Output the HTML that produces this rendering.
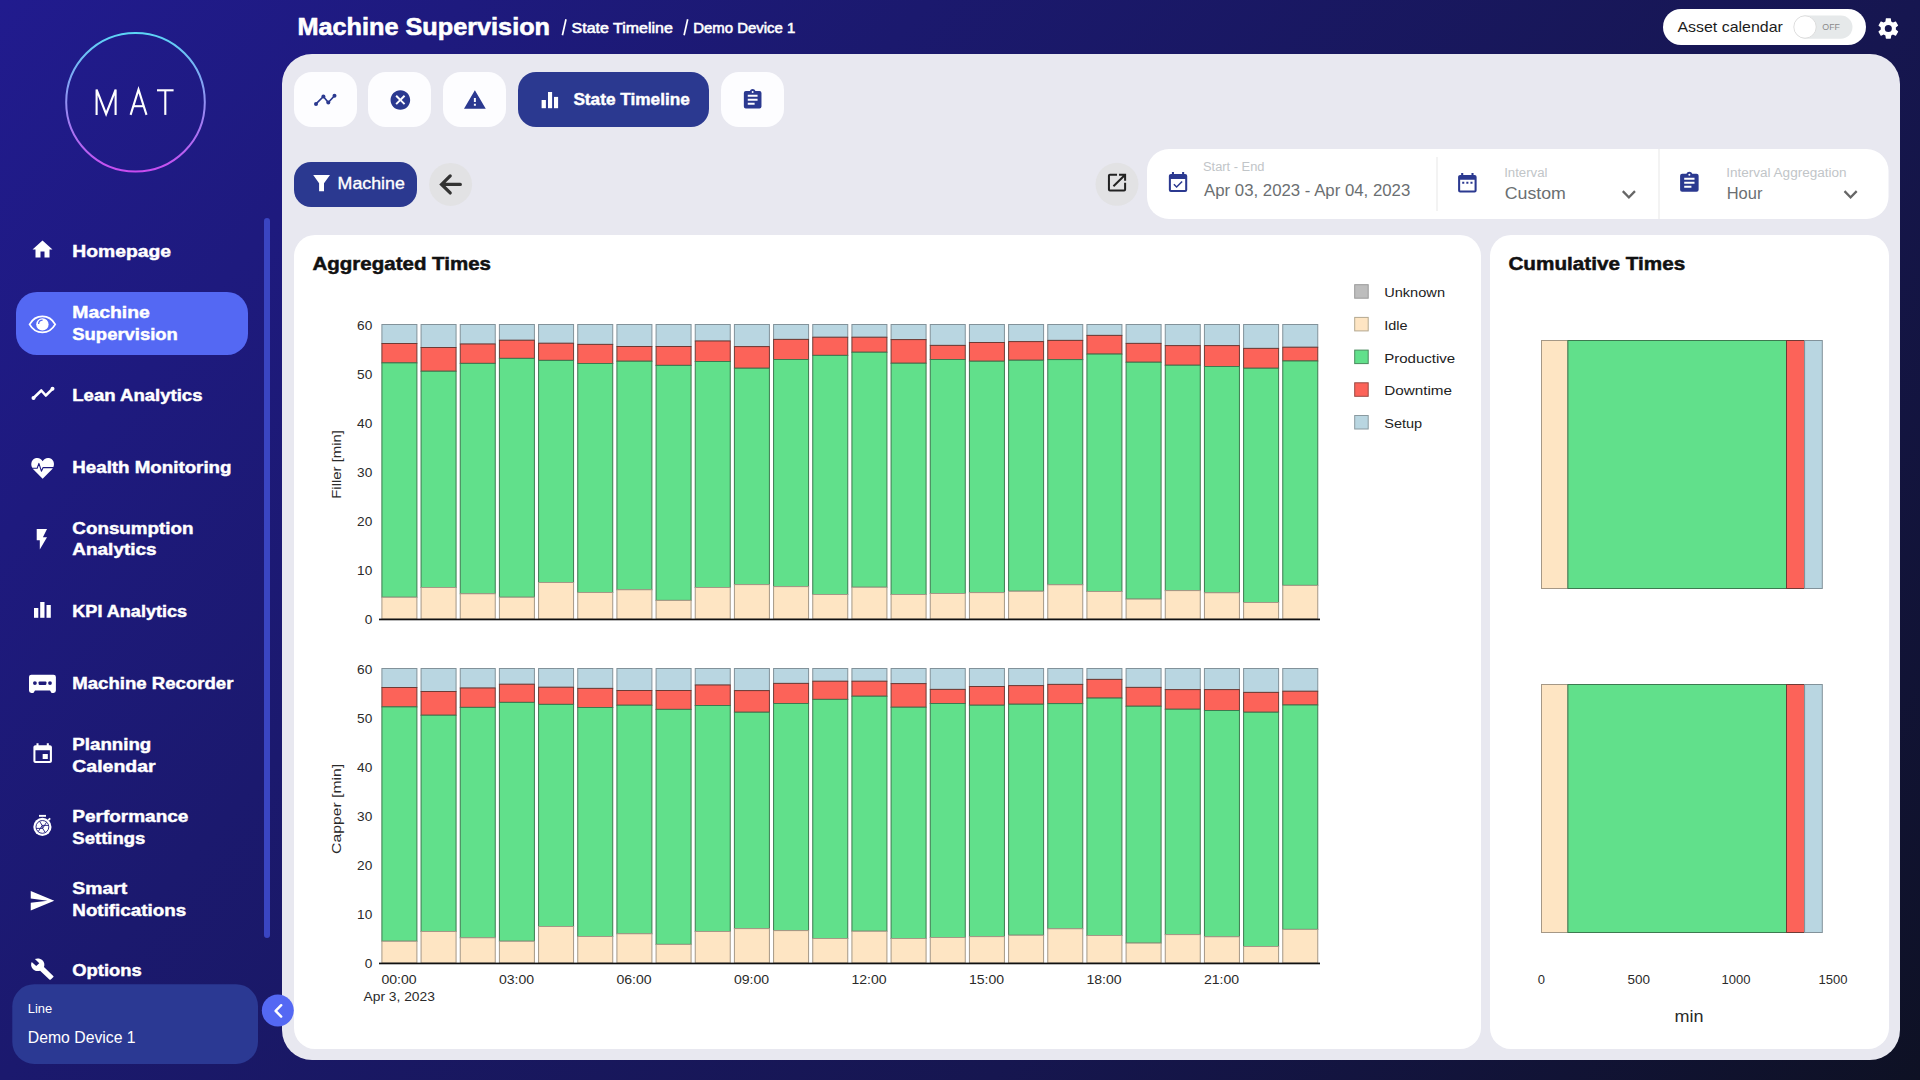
<!DOCTYPE html>
<html><head><meta charset="utf-8"><title>Machine Supervision - State Timeline</title>
<style>html,body{margin:0;padding:0;width:1920px;height:1080px;overflow:hidden;background:#1c1a74;font-family:"Liberation Sans",sans-serif}svg{display:block}</style>
</head><body>
<svg width="1920" height="1080" viewBox="0 0 1920 1080">
<defs>
<linearGradient id="bg" x1="0" y1="0" x2="1637" y2="1408" gradientUnits="userSpaceOnUse">
<stop offset="0" stop-color="#211b8e"/><stop offset="0.326" stop-color="#1b196e"/><stop offset="0.674" stop-color="#161650"/><stop offset="1" stop-color="#0e1124"/></linearGradient>
<linearGradient id="ring" x1="0" y1="0" x2="0" y2="1"><stop offset="0" stop-color="#5cd6f6"/><stop offset="1" stop-color="#c84cf0"/></linearGradient>
</defs>
<rect x="0" y="0" width="1920" height="1080" fill="url(#bg)"/>
<rect x="282" y="54" width="1618" height="1006" rx="30" fill="#e8e8f0"/>
<circle cx="135.5" cy="102.3" r="69.3" fill="none" stroke="url(#ring)" stroke-width="2"/>
<g fill="none" stroke="#fff" stroke-width="2.1" stroke-linejoin="miter"><polyline points="96.6,114.9 96.6,89.6 106.1,114 115.6,89.6 115.6,114.9"/><polyline points="130.6,114.9 138.5,89.6 146.5,114.9"/><line x1="133.3" y1="106.2" x2="143.8" y2="106.2"/><line x1="157" y1="90.3" x2="173.6" y2="90.3"/><line x1="165.3" y1="90.3" x2="165.3" y2="114.9"/></g>
<rect x="264" y="218" width="6" height="720" rx="3" fill="#3a45c2"/>
<rect x="16" y="292" width="232" height="63" rx="21" fill="#5468f3"/>
<rect x="12.3" y="984.2" width="245.7" height="79.8" rx="22" fill="#2b3993"/>
<circle cx="277.8" cy="1010.5" r="16" fill="#5468f3"/>
<path d="M281.2,1005.2 L275.6,1010.9 L281.2,1016.6" fill="none" stroke="#fff" stroke-width="2.4" stroke-linecap="round" stroke-linejoin="round"/>
<g font-family="Liberation Sans">
<text x="72.3" y="256.9" font-size="17" fill="#fff" font-weight="700" textLength="98.75" lengthAdjust="spacingAndGlyphs" stroke="#fff" stroke-width="0.45">Homepage</text>
<text x="72.3" y="317.9" font-size="17" fill="#fff" font-weight="700" textLength="77.5" lengthAdjust="spacingAndGlyphs" stroke="#fff" stroke-width="0.45">Machine</text>
<text x="72.3" y="340" font-size="17" fill="#fff" font-weight="700" textLength="105.6" lengthAdjust="spacingAndGlyphs" stroke="#fff" stroke-width="0.45">Supervision</text>
<text x="72.3" y="400.6" font-size="17" fill="#fff" font-weight="700" textLength="130.2" lengthAdjust="spacingAndGlyphs" stroke="#fff" stroke-width="0.45">Lean Analytics</text>
<text x="72.3" y="472.8" font-size="17" fill="#fff" font-weight="700" textLength="159.2" lengthAdjust="spacingAndGlyphs" stroke="#fff" stroke-width="0.45">Health Monitoring</text>
<text x="72.3" y="533.9" font-size="17" fill="#fff" font-weight="700" textLength="121.3" lengthAdjust="spacingAndGlyphs" stroke="#fff" stroke-width="0.45">Consumption</text>
<text x="72.3" y="555.2" font-size="17" fill="#fff" font-weight="700" textLength="84.3" lengthAdjust="spacingAndGlyphs" stroke="#fff" stroke-width="0.45">Analytics</text>
<text x="72.3" y="616.9" font-size="17" fill="#fff" font-weight="700" textLength="114.8" lengthAdjust="spacingAndGlyphs" stroke="#fff" stroke-width="0.45">KPI Analytics</text>
<text x="72.3" y="689" font-size="17" fill="#fff" font-weight="700" textLength="161.1" lengthAdjust="spacingAndGlyphs" stroke="#fff" stroke-width="0.45">Machine Recorder</text>
<text x="72.3" y="749.6" font-size="17" fill="#fff" font-weight="700" textLength="79" lengthAdjust="spacingAndGlyphs" stroke="#fff" stroke-width="0.45">Planning</text>
<text x="72.3" y="771.5" font-size="17" fill="#fff" font-weight="700" textLength="83.3" lengthAdjust="spacingAndGlyphs" stroke="#fff" stroke-width="0.45">Calendar</text>
<text x="72.3" y="821.9" font-size="17" fill="#fff" font-weight="700" textLength="116.1" lengthAdjust="spacingAndGlyphs" stroke="#fff" stroke-width="0.45">Performance</text>
<text x="72.3" y="843.7" font-size="17" fill="#fff" font-weight="700" textLength="73.1" lengthAdjust="spacingAndGlyphs" stroke="#fff" stroke-width="0.45">Settings</text>
<text x="72.3" y="893.7" font-size="17" fill="#fff" font-weight="700" textLength="55" lengthAdjust="spacingAndGlyphs" stroke="#fff" stroke-width="0.45">Smart</text>
<text x="72.3" y="916" font-size="17" fill="#fff" font-weight="700" textLength="113.9" lengthAdjust="spacingAndGlyphs" stroke="#fff" stroke-width="0.45">Notifications</text>
<text x="72.3" y="976" font-size="17" fill="#fff" font-weight="700" textLength="69.4" lengthAdjust="spacingAndGlyphs" stroke="#fff" stroke-width="0.45">Options</text>
<text x="27.8" y="1012.8" font-size="13" fill="#fff" textLength="24.4" lengthAdjust="spacingAndGlyphs">Line</text>
<text x="27.8" y="1043.3" font-size="16" fill="#fff" textLength="107.8" lengthAdjust="spacingAndGlyphs">Demo Device 1</text>
<text x="297.5" y="35" font-size="24" fill="#fff" font-weight="700" textLength="252.5" lengthAdjust="spacingAndGlyphs" stroke="#fff" stroke-width="0.6">Machine Supervision</text>
<text x="571.6" y="32.7" font-size="14.2" fill="#fff" textLength="101.2" lengthAdjust="spacingAndGlyphs" stroke="#fff" stroke-width="0.55">State Timeline</text>
<line x1="562.4" y1="35.2" x2="566" y2="19.2" stroke="#fff" stroke-width="1.7"/><line x1="684.1" y1="35.2" x2="687.7" y2="19.2" stroke="#fff" stroke-width="1.7"/>
<text x="693.3" y="32.7" font-size="14.2" fill="#fff" textLength="102" lengthAdjust="spacingAndGlyphs" stroke="#fff" stroke-width="0.55">Demo Device 1</text>
</g>
<path transform="translate(30.50,237.60) scale(1.000,1.000)" d="M10,20V14H14V20H19V12H22L12,3L2,12H5V20H10Z" fill="#fff"/>
<path d="M29.6,324.4 C33,318.3 37.5,316.4 42.4,316.4 C47.3,316.4 51.8,318.3 55.2,324.4 C51.8,330.5 47.3,332.4 42.4,332.4 C37.5,332.4 33,330.5 29.6,324.4 Z" fill="none" stroke="#fff" stroke-width="1.8"/><circle cx="42.4" cy="324.4" r="6.2" fill="#fff"/><path d="M38.6,324 A4,4 0 0 1 42.6,320.2" fill="none" stroke="#5467ef" stroke-width="1.3"/>
<g fill="none" stroke="#fff" stroke-width="2.6" stroke-linecap="round" stroke-linejoin="round"><polyline points="33.5,398 41.3,390.5 45.8,395.5 52.5,388.8"/></g>
<g fill="#fff"><circle cx="33.5" cy="398" r="2"/><circle cx="52.5" cy="388.8" r="2"/></g>
<path d="M42.65,478.7 L33.2,469.2 C30.2,466 30.6,460 35.3,458.3 C38.6,457.2 41.3,458.8 42.65,461.3 C44,458.8 46.7,457.2 50,458.3 C54.7,460 55.1,466 52.1,469.2 Z" fill="#fff"/><polyline points="30.5,468.2 37.2,468.2 38.9,463.4 41.4,471.2 43.1,467.6 55,467.6" fill="none" stroke="#1d1a80" stroke-width="1.1" stroke-linejoin="round"/>
<path transform="translate(29.50,526.90) scale(1.030,1.030)" d="M7,2V13H10V22L17,10H13L17,2H7Z" fill="#fff"/>
<g fill="#fff"><rect x="34" y="608" width="4.3" height="9.8"/><rect x="40.2" y="602" width="4.3" height="15.8"/><rect x="46.5" y="605" width="4.3" height="12.8"/></g>
<path d="M31.4,674.7 H53.5 A2.4,2.4 0 0 1 55.9,677.1 V690.6 A2.4,2.4 0 0 1 53.5,693 H51.6 L50,690.4 H35 L33.4,693 H31.4 A2.4,2.4 0 0 1 29,690.6 V677.1 A2.4,2.4 0 0 1 31.4,674.7 Z" fill="#fff"/>
<g fill="#1e1b7a"><circle cx="34.9" cy="683.1" r="1.9"/><rect x="38.6" y="681.4" width="7.8" height="3.5" rx="0.8"/><circle cx="50" cy="683.1" r="1.9"/></g>
<path transform="translate(30.30,742.30) scale(1.030,0.985)" d="M17 12h-5v5h5v-5zM16 1v2H8V1H6v2H5c-1.11 0-1.99.9-1.99 2L3 19c0 1.1.89 2 2 2h14c1.1 0 2-.9 2-2V5c0-1.1-.9-2-2-2h-1V1h-2zm3 18H5V8h14v11z" fill="#fff"/>
<circle cx="42.4" cy="826.9" r="9.1" fill="#fff"/><circle cx="42.4" cy="826.9" r="6.4" fill="none" stroke="#1d1a7a" stroke-width="0.9"/><g stroke="#1d1a7a" stroke-width="0.9" fill="none"><path d="M36.2,828.4 H42.8 M42.1,825.4 H48.6 M39.6,821.3 L43.2,827.2 M45.2,832.5 L41.6,826.6 M46.5,822.3 L42.7,828.2 M38.3,831.5 L42.1,825.6"/></g><rect x="39" y="814.9" width="7" height="1.9" fill="#fff"/><line x1="48.3" y1="820.2" x2="50.2" y2="818.4" stroke="#fff" stroke-width="1.8"/>
<path transform="translate(28.50,887.70) scale(1.120,1.080)" d="M2,21L23,12L2,3V10L17,12L2,14V21Z" fill="#fff"/>
<path transform="translate(30.10,957.30) scale(1.020,0.980)" d="M22.7,19L13.6,9.9C14.5,7.6 14,4.9 12.1,3C10.1,1 7.1,0.6 4.7,1.7L9,6L6,9L1.6,4.7C0.4,7.1 0.9,10.1 2.9,12.1C4.8,14 7.5,14.5 9.8,13.6L18.9,22.7C19.3,23.1 19.9,23.1 20.3,22.7L22.6,20.4C23.1,20 23.1,19.3 22.7,19Z" fill="#fff"/>
<rect x="1663" y="9" width="203" height="36" rx="18" fill="#fff"/>
<g font-family="Liberation Sans">
<text x="1677.4" y="32" font-size="14.5" fill="#1c1c1c" textLength="105.5" lengthAdjust="spacingAndGlyphs">Asset calendar</text>
</g>
<rect x="1794" y="15.5" width="58.5" height="23.2" rx="11.6" fill="#e6e9ea"/>
<circle cx="1805" cy="27" r="11.2" fill="#fff" stroke="#d5d5d5" stroke-width="0.8"/>
<text x="1822.3" y="29.8" font-family="Liberation Sans" font-size="9.5" fill="#8a8a8a" textLength="17.6" lengthAdjust="spacingAndGlyphs">OFF</text>
<path transform="translate(1876.20,16.30) scale(1.010,1.020)" d="M12,15.5A3.5,3.5 0 0,1 8.5,12A3.5,3.5 0 0,1 12,8.5A3.5,3.5 0 0,1 15.5,12A3.5,3.5 0 0,1 12,15.5M19.43,12.97C19.47,12.65 19.5,12.33 19.5,12C19.5,11.67 19.47,11.34 19.43,11L21.54,9.37C21.73,9.22 21.78,8.95 21.66,8.73L19.66,5.27C19.54,5.05 19.27,4.96 19.05,5.05L16.56,6.05C16.04,5.66 15.5,5.32 14.87,5.07L14.5,2.42C14.46,2.18 14.25,2 14,2H10C9.75,2 9.54,2.18 9.5,2.42L9.13,5.07C8.5,5.32 7.96,5.66 7.44,6.05L4.95,5.05C4.73,4.96 4.46,5.050 4.34,5.27L2.34,8.73C2.21,8.95 2.27,9.22 2.46,9.37L4.57,11C4.53,11.34 4.5,11.67 4.5,12C4.5,12.33 4.53,12.65 4.57,12.97L2.46,14.63C2.27,14.78 2.21,15.05 2.34,15.27L4.34,18.73C4.46,18.95 4.73,19.03 4.95,18.95L7.44,17.94C7.96,18.34 8.5,18.68 9.13,18.93L9.5,21.58C9.54,21.82 9.75,22 10,22H14C14.25,22 14.46,21.82 14.5,21.58L14.87,18.93C15.5,18.67 16.04,18.34 16.56,17.94L19.05,18.95C19.27,19.03 19.54,18.95 19.66,18.73L21.66,15.27C21.78,15.05 21.73,14.78 21.54,14.63L19.43,12.97Z" fill="#fff"/>
<rect x="294" y="72" width="63" height="55" rx="18" fill="#fdfdff"/>
<rect x="368" y="72" width="63" height="55" rx="18" fill="#fdfdff"/>
<rect x="443" y="72" width="63" height="55" rx="18" fill="#fdfdff"/>
<rect x="721" y="72" width="63" height="55" rx="18" fill="#fdfdff"/>
<rect x="518" y="72" width="191" height="55" rx="18" fill="#2b3990"/>
<g fill="none" stroke="#2b3990" stroke-width="1.7" stroke-linejoin="round"><polyline points="316,103.9 323.4,96.5 328.3,102.5 334.5,95.7"/></g><g fill="#2b3990"><circle cx="316" cy="103.9" r="2"/><circle cx="323.4" cy="96.5" r="2"/><circle cx="328.3" cy="102.5" r="2"/><circle cx="334.5" cy="95.7" r="2"/></g>
<path transform="translate(388.60,88.20) scale(0.980,0.980)" d="M12,2C17.53,2 22,6.47 22,12C22,17.53 17.53,22 12,22C6.47,22 2,17.530 2,12C2,6.47 6.47,2 12,2M15.59,7L12,10.59L8.41,7L7,8.41L10.59,12L7,15.59L8.41,17L12,13.41L15.59,17L17,15.59L13.41,12L17,8.41L15.59,7Z" fill="#2b3990"/>
<path transform="translate(463.00,88.40) scale(0.990,0.965)" d="M13,14H11V10H13M13,18H11V16H13M1,21H23L12,2L1,21Z" fill="#2b3990"/>
<g fill="#fff"><rect x="541.6" y="100" width="4.3" height="8.2"/><rect x="548" y="92" width="4.1" height="16.2"/><rect x="554" y="96.9" width="4.1" height="11.3"/></g>
<g font-family="Liberation Sans">
<text x="573.4" y="105" font-size="17" fill="#fff" font-weight="700" textLength="116.4" lengthAdjust="spacingAndGlyphs" stroke="#fff" stroke-width="0.45">State Timeline</text>
</g>
<path transform="translate(740.90,88.00) scale(0.980,0.980)" d="M17,9H7V7H17M17,13H7V11H17M14,17H7V15H14M12,3A1,1 0 0,1 13,4A1,1 0 0,1 12,5A1,1 0 0,1 11,4A1,1 0 0,1 12,3M19,3H14.82C14.4,1.84 13.3,1 12,1C10.7,1 9.6,1.84 9.18,3H5A2,2 0 0,0 3,5V19A2,2 0 0,0 5,21H19A2,2 0 0,0 21,19V5A2,2 0 0,0 19,3Z" fill="#2b3990"/>
<rect x="294" y="162" width="123" height="45" rx="17" fill="#2b3990"/>
<polygon points="313.2,174.9 330,174.9 324,183.3 324,191.3 319.1,191.3 319.1,183.3" fill="#fff"/>
<g font-family="Liberation Sans">
<text x="337.6" y="189.4" font-size="16.5" fill="#fff" textLength="67.2" lengthAdjust="spacingAndGlyphs" stroke="#fff" stroke-width="0.35">Machine</text>
</g>
<circle cx="450.6" cy="184.4" r="21.5" fill="#e2e2e4"/>
<path d="M460.3,184.4 H443 M450.2,175.9 L441.6,184.4 L450.2,192.9" fill="none" stroke="#333" stroke-width="3.3" stroke-linecap="round" stroke-linejoin="miter"/>
<circle cx="1117" cy="184.3" r="21.5" fill="#e2e2e4"/>
<path transform="translate(1104.90,170.80) scale(1.010,0.990)" d="M14,3V5H17.59L7.76,14.83L9.17,16.24L19,6.41V10H21V3M19,19H5V5H12V3H5C3.89,3 3,3.9 3,5V19A2,2 0 0,0 5,21H19A2,2 0 0,0 21,19V12H19V19Z" fill="#222"/>
<rect x="1147" y="149" width="741.5" height="70" rx="22" fill="#fff"/>
<rect x="1436.4" y="157" width="1.2" height="54" fill="#ececec"/>
<rect x="1658.4" y="149" width="1.2" height="70" fill="#ececec"/>
<path transform="translate(1165.80,170.90) scale(1.020,1.010)" d="M19,19H5V8H19M19,3H18V1H16V3H8V1H6V3H5C3.89,3 3,3.9 3,5V19A2,2 0 0,0 5,21H19A2,2 0 0,0 21,19V5A2,2 0 0,0 19,3M16.53,11.06L15.47,10L10.590,14.88L8.47,12.76L7.41,13.82L10.59,17L16.53,11.06Z" fill="#2b3990"/>
<path transform="translate(1455.00,172.00) scale(1.030,0.980)" d="M19,19H5V8H19M19,3H18V1H16V3H8V1H6V3H5C3.89,3 3,3.9 3,5V19A2,2 0 0,0 5,21H19A2,2 0 0,0 21,19V5A2,2 0 0,0 19,3M7,10H9V12H7M11,10H13V12H11M15,10H17V12H15Z" fill="#2b3990"/>
<path transform="translate(1677.00,170.80) scale(1.030,1.000)" d="M17,9H7V7H17M17,13H7V11H17M14,17H7V15H14M12,3A1,1 0 0,1 13,4A1,1 0 0,1 12,5A1,1 0 0,1 11,4A1,1 0 0,1 12,3M19,3H14.82C14.4,1.84 13.3,1 12,1C10.7,1 9.6,1.84 9.18,3H5A2,2 0 0,0 3,5V19A2,2 0 0,0 5,21H19A2,2 0 0,0 21,19V5A2,2 0 0,0 19,3Z" fill="#2b3990"/>
<path transform="translate(1615.10,180.10) scale(1.150,1.180)" d="M7.41,8.58L12,13.17L16.59,8.58L18,10L12,16L6,10L7.41,8.58Z" fill="#666"/>
<path transform="translate(1836.80,180.10) scale(1.150,1.180)" d="M7.41,8.58L12,13.17L16.59,8.58L18,10L12,16L6,10L7.41,8.58Z" fill="#666"/>
<g font-family="Liberation Sans">
<text x="1203" y="171" font-size="12.5" fill="#c1c5c8" textLength="61.5" lengthAdjust="spacingAndGlyphs">Start - End</text>
<text x="1204" y="195.9" font-size="16" fill="#6b6f72" textLength="206.3" lengthAdjust="spacingAndGlyphs">Apr 03, 2023 - Apr 04, 2023</text>
<text x="1504.2" y="176.7" font-size="12.5" fill="#c1c5c8" textLength="43.3" lengthAdjust="spacingAndGlyphs">Interval</text>
<text x="1504.7" y="199.2" font-size="17" fill="#6b6f72" textLength="61.2" lengthAdjust="spacingAndGlyphs">Custom</text>
<text x="1726.2" y="176.7" font-size="12.5" fill="#c1c5c8" textLength="120.4" lengthAdjust="spacingAndGlyphs">Interval Aggregation</text>
<text x="1726.7" y="199.2" font-size="17" fill="#6b6f72" textLength="35.7" lengthAdjust="spacingAndGlyphs">Hour</text>
</g>
<rect x="294" y="235" width="1187" height="814" rx="21" fill="#fff"/>
<rect x="1490" y="235" width="399" height="814" rx="21" fill="#fff"/>
<g font-family="Liberation Sans">
<text x="312.5" y="270" font-size="18.6" fill="#111" font-weight="700" textLength="178.5" lengthAdjust="spacingAndGlyphs" stroke="#111" stroke-width="0.5">Aggregated Times</text>
<text x="1508.4" y="269.9" font-size="18.6" fill="#111" font-weight="700" textLength="176.8" lengthAdjust="spacingAndGlyphs" stroke="#111" stroke-width="0.5">Cumulative Times</text>
</g>
<rect x="381.90" y="324.50" width="35.0" height="19.00" fill="#b9d6e1" stroke="#82929a" stroke-width="1"/>
<rect x="381.90" y="343.50" width="35.0" height="19.40" fill="#fc6359" stroke="#6e3b35" stroke-width="1"/>
<rect x="381.90" y="362.90" width="35.0" height="234.35" fill="#61e08b" stroke="#3d7a50" stroke-width="1"/>
<rect x="381.90" y="597.25" width="35.0" height="21.75" fill="#fee5c3" stroke="#a59886" stroke-width="1"/>
<rect x="421.07" y="324.50" width="35.0" height="23.00" fill="#b9d6e1" stroke="#82929a" stroke-width="1"/>
<rect x="421.07" y="347.50" width="35.0" height="23.75" fill="#fc6359" stroke="#6e3b35" stroke-width="1"/>
<rect x="421.07" y="371.25" width="35.0" height="216.25" fill="#61e08b" stroke="#3d7a50" stroke-width="1"/>
<rect x="421.07" y="587.50" width="35.0" height="31.50" fill="#fee5c3" stroke="#a59886" stroke-width="1"/>
<rect x="460.24" y="324.50" width="35.0" height="19.50" fill="#b9d6e1" stroke="#82929a" stroke-width="1"/>
<rect x="460.24" y="344.00" width="35.0" height="19.40" fill="#fc6359" stroke="#6e3b35" stroke-width="1"/>
<rect x="460.24" y="363.40" width="35.0" height="230.35" fill="#61e08b" stroke="#3d7a50" stroke-width="1"/>
<rect x="460.24" y="593.75" width="35.0" height="25.25" fill="#fee5c3" stroke="#a59886" stroke-width="1"/>
<rect x="499.40" y="324.50" width="35.0" height="15.75" fill="#b9d6e1" stroke="#82929a" stroke-width="1"/>
<rect x="499.40" y="340.25" width="35.0" height="18.15" fill="#fc6359" stroke="#6e3b35" stroke-width="1"/>
<rect x="499.40" y="358.40" width="35.0" height="238.85" fill="#61e08b" stroke="#3d7a50" stroke-width="1"/>
<rect x="499.40" y="597.25" width="35.0" height="21.75" fill="#fee5c3" stroke="#a59886" stroke-width="1"/>
<rect x="538.57" y="324.50" width="35.0" height="18.75" fill="#b9d6e1" stroke="#82929a" stroke-width="1"/>
<rect x="538.57" y="343.25" width="35.0" height="17.15" fill="#fc6359" stroke="#6e3b35" stroke-width="1"/>
<rect x="538.57" y="360.40" width="35.0" height="222.10" fill="#61e08b" stroke="#3d7a50" stroke-width="1"/>
<rect x="538.57" y="582.50" width="35.0" height="36.50" fill="#fee5c3" stroke="#a59886" stroke-width="1"/>
<rect x="577.74" y="324.50" width="35.0" height="19.90" fill="#b9d6e1" stroke="#82929a" stroke-width="1"/>
<rect x="577.74" y="344.40" width="35.0" height="19.10" fill="#fc6359" stroke="#6e3b35" stroke-width="1"/>
<rect x="577.74" y="363.50" width="35.0" height="229.00" fill="#61e08b" stroke="#3d7a50" stroke-width="1"/>
<rect x="577.74" y="592.50" width="35.0" height="26.50" fill="#fee5c3" stroke="#a59886" stroke-width="1"/>
<rect x="616.91" y="324.50" width="35.0" height="22.00" fill="#b9d6e1" stroke="#82929a" stroke-width="1"/>
<rect x="616.91" y="346.50" width="35.0" height="14.75" fill="#fc6359" stroke="#6e3b35" stroke-width="1"/>
<rect x="616.91" y="361.25" width="35.0" height="228.50" fill="#61e08b" stroke="#3d7a50" stroke-width="1"/>
<rect x="616.91" y="589.75" width="35.0" height="29.25" fill="#fee5c3" stroke="#a59886" stroke-width="1"/>
<rect x="656.08" y="324.50" width="35.0" height="22.00" fill="#b9d6e1" stroke="#82929a" stroke-width="1"/>
<rect x="656.08" y="346.50" width="35.0" height="18.90" fill="#fc6359" stroke="#6e3b35" stroke-width="1"/>
<rect x="656.08" y="365.40" width="35.0" height="235.00" fill="#61e08b" stroke="#3d7a50" stroke-width="1"/>
<rect x="656.08" y="600.40" width="35.0" height="18.60" fill="#fee5c3" stroke="#a59886" stroke-width="1"/>
<rect x="695.24" y="324.50" width="35.0" height="16.50" fill="#b9d6e1" stroke="#82929a" stroke-width="1"/>
<rect x="695.24" y="341.00" width="35.0" height="20.50" fill="#fc6359" stroke="#6e3b35" stroke-width="1"/>
<rect x="695.24" y="361.50" width="35.0" height="226.00" fill="#61e08b" stroke="#3d7a50" stroke-width="1"/>
<rect x="695.24" y="587.50" width="35.0" height="31.50" fill="#fee5c3" stroke="#a59886" stroke-width="1"/>
<rect x="734.41" y="324.50" width="35.0" height="22.10" fill="#b9d6e1" stroke="#82929a" stroke-width="1"/>
<rect x="734.41" y="346.60" width="35.0" height="21.65" fill="#fc6359" stroke="#6e3b35" stroke-width="1"/>
<rect x="734.41" y="368.25" width="35.0" height="216.35" fill="#61e08b" stroke="#3d7a50" stroke-width="1"/>
<rect x="734.41" y="584.60" width="35.0" height="34.40" fill="#fee5c3" stroke="#a59886" stroke-width="1"/>
<rect x="773.58" y="324.50" width="35.0" height="14.90" fill="#b9d6e1" stroke="#82929a" stroke-width="1"/>
<rect x="773.58" y="339.40" width="35.0" height="20.10" fill="#fc6359" stroke="#6e3b35" stroke-width="1"/>
<rect x="773.58" y="359.50" width="35.0" height="227.10" fill="#61e08b" stroke="#3d7a50" stroke-width="1"/>
<rect x="773.58" y="586.60" width="35.0" height="32.40" fill="#fee5c3" stroke="#a59886" stroke-width="1"/>
<rect x="812.75" y="324.50" width="35.0" height="12.75" fill="#b9d6e1" stroke="#82929a" stroke-width="1"/>
<rect x="812.75" y="337.25" width="35.0" height="18.15" fill="#fc6359" stroke="#6e3b35" stroke-width="1"/>
<rect x="812.75" y="355.40" width="35.0" height="239.10" fill="#61e08b" stroke="#3d7a50" stroke-width="1"/>
<rect x="812.75" y="594.50" width="35.0" height="24.50" fill="#fee5c3" stroke="#a59886" stroke-width="1"/>
<rect x="851.92" y="324.50" width="35.0" height="12.75" fill="#b9d6e1" stroke="#82929a" stroke-width="1"/>
<rect x="851.92" y="337.25" width="35.0" height="15.00" fill="#fc6359" stroke="#6e3b35" stroke-width="1"/>
<rect x="851.92" y="352.25" width="35.0" height="235.00" fill="#61e08b" stroke="#3d7a50" stroke-width="1"/>
<rect x="851.92" y="587.25" width="35.0" height="31.75" fill="#fee5c3" stroke="#a59886" stroke-width="1"/>
<rect x="891.08" y="324.50" width="35.0" height="15.10" fill="#b9d6e1" stroke="#82929a" stroke-width="1"/>
<rect x="891.08" y="339.60" width="35.0" height="23.65" fill="#fc6359" stroke="#6e3b35" stroke-width="1"/>
<rect x="891.08" y="363.25" width="35.0" height="231.25" fill="#61e08b" stroke="#3d7a50" stroke-width="1"/>
<rect x="891.08" y="594.50" width="35.0" height="24.50" fill="#fee5c3" stroke="#a59886" stroke-width="1"/>
<rect x="930.25" y="324.50" width="35.0" height="20.90" fill="#b9d6e1" stroke="#82929a" stroke-width="1"/>
<rect x="930.25" y="345.40" width="35.0" height="14.10" fill="#fc6359" stroke="#6e3b35" stroke-width="1"/>
<rect x="930.25" y="359.50" width="35.0" height="234.00" fill="#61e08b" stroke="#3d7a50" stroke-width="1"/>
<rect x="930.25" y="593.50" width="35.0" height="25.50" fill="#fee5c3" stroke="#a59886" stroke-width="1"/>
<rect x="969.42" y="324.50" width="35.0" height="18.00" fill="#b9d6e1" stroke="#82929a" stroke-width="1"/>
<rect x="969.42" y="342.50" width="35.0" height="18.75" fill="#fc6359" stroke="#6e3b35" stroke-width="1"/>
<rect x="969.42" y="361.25" width="35.0" height="231.35" fill="#61e08b" stroke="#3d7a50" stroke-width="1"/>
<rect x="969.42" y="592.60" width="35.0" height="26.40" fill="#fee5c3" stroke="#a59886" stroke-width="1"/>
<rect x="1008.59" y="324.50" width="35.0" height="17.10" fill="#b9d6e1" stroke="#82929a" stroke-width="1"/>
<rect x="1008.59" y="341.60" width="35.0" height="18.65" fill="#fc6359" stroke="#6e3b35" stroke-width="1"/>
<rect x="1008.59" y="360.25" width="35.0" height="231.00" fill="#61e08b" stroke="#3d7a50" stroke-width="1"/>
<rect x="1008.59" y="591.25" width="35.0" height="27.75" fill="#fee5c3" stroke="#a59886" stroke-width="1"/>
<rect x="1047.76" y="324.50" width="35.0" height="15.90" fill="#b9d6e1" stroke="#82929a" stroke-width="1"/>
<rect x="1047.76" y="340.40" width="35.0" height="19.20" fill="#fc6359" stroke="#6e3b35" stroke-width="1"/>
<rect x="1047.76" y="359.60" width="35.0" height="225.15" fill="#61e08b" stroke="#3d7a50" stroke-width="1"/>
<rect x="1047.76" y="584.75" width="35.0" height="34.25" fill="#fee5c3" stroke="#a59886" stroke-width="1"/>
<rect x="1086.92" y="324.50" width="35.0" height="10.90" fill="#b9d6e1" stroke="#82929a" stroke-width="1"/>
<rect x="1086.92" y="335.40" width="35.0" height="18.70" fill="#fc6359" stroke="#6e3b35" stroke-width="1"/>
<rect x="1086.92" y="354.10" width="35.0" height="237.40" fill="#61e08b" stroke="#3d7a50" stroke-width="1"/>
<rect x="1086.92" y="591.50" width="35.0" height="27.50" fill="#fee5c3" stroke="#a59886" stroke-width="1"/>
<rect x="1126.09" y="324.50" width="35.0" height="18.90" fill="#b9d6e1" stroke="#82929a" stroke-width="1"/>
<rect x="1126.09" y="343.40" width="35.0" height="18.85" fill="#fc6359" stroke="#6e3b35" stroke-width="1"/>
<rect x="1126.09" y="362.25" width="35.0" height="236.85" fill="#61e08b" stroke="#3d7a50" stroke-width="1"/>
<rect x="1126.09" y="599.10" width="35.0" height="19.90" fill="#fee5c3" stroke="#a59886" stroke-width="1"/>
<rect x="1165.26" y="324.50" width="35.0" height="21.10" fill="#b9d6e1" stroke="#82929a" stroke-width="1"/>
<rect x="1165.26" y="345.60" width="35.0" height="19.65" fill="#fc6359" stroke="#6e3b35" stroke-width="1"/>
<rect x="1165.26" y="365.25" width="35.0" height="225.35" fill="#61e08b" stroke="#3d7a50" stroke-width="1"/>
<rect x="1165.26" y="590.60" width="35.0" height="28.40" fill="#fee5c3" stroke="#a59886" stroke-width="1"/>
<rect x="1204.43" y="324.50" width="35.0" height="21.10" fill="#b9d6e1" stroke="#82929a" stroke-width="1"/>
<rect x="1204.43" y="345.60" width="35.0" height="20.90" fill="#fc6359" stroke="#6e3b35" stroke-width="1"/>
<rect x="1204.43" y="366.50" width="35.0" height="226.25" fill="#61e08b" stroke="#3d7a50" stroke-width="1"/>
<rect x="1204.43" y="592.75" width="35.0" height="26.25" fill="#fee5c3" stroke="#a59886" stroke-width="1"/>
<rect x="1243.60" y="324.50" width="35.0" height="23.90" fill="#b9d6e1" stroke="#82929a" stroke-width="1"/>
<rect x="1243.60" y="348.40" width="35.0" height="19.85" fill="#fc6359" stroke="#6e3b35" stroke-width="1"/>
<rect x="1243.60" y="368.25" width="35.0" height="234.25" fill="#61e08b" stroke="#3d7a50" stroke-width="1"/>
<rect x="1243.60" y="602.50" width="35.0" height="16.50" fill="#fee5c3" stroke="#a59886" stroke-width="1"/>
<rect x="1282.76" y="324.50" width="35.0" height="22.75" fill="#b9d6e1" stroke="#82929a" stroke-width="1"/>
<rect x="1282.76" y="347.25" width="35.0" height="13.75" fill="#fc6359" stroke="#6e3b35" stroke-width="1"/>
<rect x="1282.76" y="361.00" width="35.0" height="224.40" fill="#61e08b" stroke="#3d7a50" stroke-width="1"/>
<rect x="1282.76" y="585.40" width="35.0" height="33.60" fill="#fee5c3" stroke="#a59886" stroke-width="1"/>
<rect x="381.90" y="668.50" width="35.0" height="19.00" fill="#b9d6e1" stroke="#82929a" stroke-width="1"/>
<rect x="381.90" y="687.50" width="35.0" height="19.40" fill="#fc6359" stroke="#6e3b35" stroke-width="1"/>
<rect x="381.90" y="706.90" width="35.0" height="234.35" fill="#61e08b" stroke="#3d7a50" stroke-width="1"/>
<rect x="381.90" y="941.25" width="35.0" height="21.75" fill="#fee5c3" stroke="#a59886" stroke-width="1"/>
<rect x="421.07" y="668.50" width="35.0" height="23.00" fill="#b9d6e1" stroke="#82929a" stroke-width="1"/>
<rect x="421.07" y="691.50" width="35.0" height="23.75" fill="#fc6359" stroke="#6e3b35" stroke-width="1"/>
<rect x="421.07" y="715.25" width="35.0" height="216.25" fill="#61e08b" stroke="#3d7a50" stroke-width="1"/>
<rect x="421.07" y="931.50" width="35.0" height="31.50" fill="#fee5c3" stroke="#a59886" stroke-width="1"/>
<rect x="460.24" y="668.50" width="35.0" height="19.50" fill="#b9d6e1" stroke="#82929a" stroke-width="1"/>
<rect x="460.24" y="688.00" width="35.0" height="19.40" fill="#fc6359" stroke="#6e3b35" stroke-width="1"/>
<rect x="460.24" y="707.40" width="35.0" height="230.35" fill="#61e08b" stroke="#3d7a50" stroke-width="1"/>
<rect x="460.24" y="937.75" width="35.0" height="25.25" fill="#fee5c3" stroke="#a59886" stroke-width="1"/>
<rect x="499.40" y="668.50" width="35.0" height="15.75" fill="#b9d6e1" stroke="#82929a" stroke-width="1"/>
<rect x="499.40" y="684.25" width="35.0" height="18.15" fill="#fc6359" stroke="#6e3b35" stroke-width="1"/>
<rect x="499.40" y="702.40" width="35.0" height="238.85" fill="#61e08b" stroke="#3d7a50" stroke-width="1"/>
<rect x="499.40" y="941.25" width="35.0" height="21.75" fill="#fee5c3" stroke="#a59886" stroke-width="1"/>
<rect x="538.57" y="668.50" width="35.0" height="18.75" fill="#b9d6e1" stroke="#82929a" stroke-width="1"/>
<rect x="538.57" y="687.25" width="35.0" height="17.15" fill="#fc6359" stroke="#6e3b35" stroke-width="1"/>
<rect x="538.57" y="704.40" width="35.0" height="222.10" fill="#61e08b" stroke="#3d7a50" stroke-width="1"/>
<rect x="538.57" y="926.50" width="35.0" height="36.50" fill="#fee5c3" stroke="#a59886" stroke-width="1"/>
<rect x="577.74" y="668.50" width="35.0" height="19.90" fill="#b9d6e1" stroke="#82929a" stroke-width="1"/>
<rect x="577.74" y="688.40" width="35.0" height="19.10" fill="#fc6359" stroke="#6e3b35" stroke-width="1"/>
<rect x="577.74" y="707.50" width="35.0" height="229.00" fill="#61e08b" stroke="#3d7a50" stroke-width="1"/>
<rect x="577.74" y="936.50" width="35.0" height="26.50" fill="#fee5c3" stroke="#a59886" stroke-width="1"/>
<rect x="616.91" y="668.50" width="35.0" height="22.00" fill="#b9d6e1" stroke="#82929a" stroke-width="1"/>
<rect x="616.91" y="690.50" width="35.0" height="14.75" fill="#fc6359" stroke="#6e3b35" stroke-width="1"/>
<rect x="616.91" y="705.25" width="35.0" height="228.50" fill="#61e08b" stroke="#3d7a50" stroke-width="1"/>
<rect x="616.91" y="933.75" width="35.0" height="29.25" fill="#fee5c3" stroke="#a59886" stroke-width="1"/>
<rect x="656.08" y="668.50" width="35.0" height="22.00" fill="#b9d6e1" stroke="#82929a" stroke-width="1"/>
<rect x="656.08" y="690.50" width="35.0" height="18.90" fill="#fc6359" stroke="#6e3b35" stroke-width="1"/>
<rect x="656.08" y="709.40" width="35.0" height="235.00" fill="#61e08b" stroke="#3d7a50" stroke-width="1"/>
<rect x="656.08" y="944.40" width="35.0" height="18.60" fill="#fee5c3" stroke="#a59886" stroke-width="1"/>
<rect x="695.24" y="668.50" width="35.0" height="16.50" fill="#b9d6e1" stroke="#82929a" stroke-width="1"/>
<rect x="695.24" y="685.00" width="35.0" height="20.50" fill="#fc6359" stroke="#6e3b35" stroke-width="1"/>
<rect x="695.24" y="705.50" width="35.0" height="226.00" fill="#61e08b" stroke="#3d7a50" stroke-width="1"/>
<rect x="695.24" y="931.50" width="35.0" height="31.50" fill="#fee5c3" stroke="#a59886" stroke-width="1"/>
<rect x="734.41" y="668.50" width="35.0" height="22.10" fill="#b9d6e1" stroke="#82929a" stroke-width="1"/>
<rect x="734.41" y="690.60" width="35.0" height="21.65" fill="#fc6359" stroke="#6e3b35" stroke-width="1"/>
<rect x="734.41" y="712.25" width="35.0" height="216.35" fill="#61e08b" stroke="#3d7a50" stroke-width="1"/>
<rect x="734.41" y="928.60" width="35.0" height="34.40" fill="#fee5c3" stroke="#a59886" stroke-width="1"/>
<rect x="773.58" y="668.50" width="35.0" height="14.90" fill="#b9d6e1" stroke="#82929a" stroke-width="1"/>
<rect x="773.58" y="683.40" width="35.0" height="20.10" fill="#fc6359" stroke="#6e3b35" stroke-width="1"/>
<rect x="773.58" y="703.50" width="35.0" height="227.10" fill="#61e08b" stroke="#3d7a50" stroke-width="1"/>
<rect x="773.58" y="930.60" width="35.0" height="32.40" fill="#fee5c3" stroke="#a59886" stroke-width="1"/>
<rect x="812.75" y="668.50" width="35.0" height="12.75" fill="#b9d6e1" stroke="#82929a" stroke-width="1"/>
<rect x="812.75" y="681.25" width="35.0" height="18.15" fill="#fc6359" stroke="#6e3b35" stroke-width="1"/>
<rect x="812.75" y="699.40" width="35.0" height="239.10" fill="#61e08b" stroke="#3d7a50" stroke-width="1"/>
<rect x="812.75" y="938.50" width="35.0" height="24.50" fill="#fee5c3" stroke="#a59886" stroke-width="1"/>
<rect x="851.92" y="668.50" width="35.0" height="12.75" fill="#b9d6e1" stroke="#82929a" stroke-width="1"/>
<rect x="851.92" y="681.25" width="35.0" height="15.00" fill="#fc6359" stroke="#6e3b35" stroke-width="1"/>
<rect x="851.92" y="696.25" width="35.0" height="235.00" fill="#61e08b" stroke="#3d7a50" stroke-width="1"/>
<rect x="851.92" y="931.25" width="35.0" height="31.75" fill="#fee5c3" stroke="#a59886" stroke-width="1"/>
<rect x="891.08" y="668.50" width="35.0" height="15.10" fill="#b9d6e1" stroke="#82929a" stroke-width="1"/>
<rect x="891.08" y="683.60" width="35.0" height="23.65" fill="#fc6359" stroke="#6e3b35" stroke-width="1"/>
<rect x="891.08" y="707.25" width="35.0" height="231.25" fill="#61e08b" stroke="#3d7a50" stroke-width="1"/>
<rect x="891.08" y="938.50" width="35.0" height="24.50" fill="#fee5c3" stroke="#a59886" stroke-width="1"/>
<rect x="930.25" y="668.50" width="35.0" height="20.90" fill="#b9d6e1" stroke="#82929a" stroke-width="1"/>
<rect x="930.25" y="689.40" width="35.0" height="14.10" fill="#fc6359" stroke="#6e3b35" stroke-width="1"/>
<rect x="930.25" y="703.50" width="35.0" height="234.00" fill="#61e08b" stroke="#3d7a50" stroke-width="1"/>
<rect x="930.25" y="937.50" width="35.0" height="25.50" fill="#fee5c3" stroke="#a59886" stroke-width="1"/>
<rect x="969.42" y="668.50" width="35.0" height="18.00" fill="#b9d6e1" stroke="#82929a" stroke-width="1"/>
<rect x="969.42" y="686.50" width="35.0" height="18.75" fill="#fc6359" stroke="#6e3b35" stroke-width="1"/>
<rect x="969.42" y="705.25" width="35.0" height="231.35" fill="#61e08b" stroke="#3d7a50" stroke-width="1"/>
<rect x="969.42" y="936.60" width="35.0" height="26.40" fill="#fee5c3" stroke="#a59886" stroke-width="1"/>
<rect x="1008.59" y="668.50" width="35.0" height="17.10" fill="#b9d6e1" stroke="#82929a" stroke-width="1"/>
<rect x="1008.59" y="685.60" width="35.0" height="18.65" fill="#fc6359" stroke="#6e3b35" stroke-width="1"/>
<rect x="1008.59" y="704.25" width="35.0" height="231.00" fill="#61e08b" stroke="#3d7a50" stroke-width="1"/>
<rect x="1008.59" y="935.25" width="35.0" height="27.75" fill="#fee5c3" stroke="#a59886" stroke-width="1"/>
<rect x="1047.76" y="668.50" width="35.0" height="15.90" fill="#b9d6e1" stroke="#82929a" stroke-width="1"/>
<rect x="1047.76" y="684.40" width="35.0" height="19.20" fill="#fc6359" stroke="#6e3b35" stroke-width="1"/>
<rect x="1047.76" y="703.60" width="35.0" height="225.15" fill="#61e08b" stroke="#3d7a50" stroke-width="1"/>
<rect x="1047.76" y="928.75" width="35.0" height="34.25" fill="#fee5c3" stroke="#a59886" stroke-width="1"/>
<rect x="1086.92" y="668.50" width="35.0" height="10.90" fill="#b9d6e1" stroke="#82929a" stroke-width="1"/>
<rect x="1086.92" y="679.40" width="35.0" height="18.70" fill="#fc6359" stroke="#6e3b35" stroke-width="1"/>
<rect x="1086.92" y="698.10" width="35.0" height="237.40" fill="#61e08b" stroke="#3d7a50" stroke-width="1"/>
<rect x="1086.92" y="935.50" width="35.0" height="27.50" fill="#fee5c3" stroke="#a59886" stroke-width="1"/>
<rect x="1126.09" y="668.50" width="35.0" height="18.90" fill="#b9d6e1" stroke="#82929a" stroke-width="1"/>
<rect x="1126.09" y="687.40" width="35.0" height="18.85" fill="#fc6359" stroke="#6e3b35" stroke-width="1"/>
<rect x="1126.09" y="706.25" width="35.0" height="236.85" fill="#61e08b" stroke="#3d7a50" stroke-width="1"/>
<rect x="1126.09" y="943.10" width="35.0" height="19.90" fill="#fee5c3" stroke="#a59886" stroke-width="1"/>
<rect x="1165.26" y="668.50" width="35.0" height="21.10" fill="#b9d6e1" stroke="#82929a" stroke-width="1"/>
<rect x="1165.26" y="689.60" width="35.0" height="19.65" fill="#fc6359" stroke="#6e3b35" stroke-width="1"/>
<rect x="1165.26" y="709.25" width="35.0" height="225.35" fill="#61e08b" stroke="#3d7a50" stroke-width="1"/>
<rect x="1165.26" y="934.60" width="35.0" height="28.40" fill="#fee5c3" stroke="#a59886" stroke-width="1"/>
<rect x="1204.43" y="668.50" width="35.0" height="21.10" fill="#b9d6e1" stroke="#82929a" stroke-width="1"/>
<rect x="1204.43" y="689.60" width="35.0" height="20.90" fill="#fc6359" stroke="#6e3b35" stroke-width="1"/>
<rect x="1204.43" y="710.50" width="35.0" height="226.25" fill="#61e08b" stroke="#3d7a50" stroke-width="1"/>
<rect x="1204.43" y="936.75" width="35.0" height="26.25" fill="#fee5c3" stroke="#a59886" stroke-width="1"/>
<rect x="1243.60" y="668.50" width="35.0" height="23.90" fill="#b9d6e1" stroke="#82929a" stroke-width="1"/>
<rect x="1243.60" y="692.40" width="35.0" height="19.85" fill="#fc6359" stroke="#6e3b35" stroke-width="1"/>
<rect x="1243.60" y="712.25" width="35.0" height="234.25" fill="#61e08b" stroke="#3d7a50" stroke-width="1"/>
<rect x="1243.60" y="946.50" width="35.0" height="16.50" fill="#fee5c3" stroke="#a59886" stroke-width="1"/>
<rect x="1282.76" y="668.50" width="35.0" height="22.75" fill="#b9d6e1" stroke="#82929a" stroke-width="1"/>
<rect x="1282.76" y="691.25" width="35.0" height="13.75" fill="#fc6359" stroke="#6e3b35" stroke-width="1"/>
<rect x="1282.76" y="705.00" width="35.0" height="224.40" fill="#61e08b" stroke="#3d7a50" stroke-width="1"/>
<rect x="1282.76" y="929.40" width="35.0" height="33.60" fill="#fee5c3" stroke="#a59886" stroke-width="1"/>
<rect x="379" y="618.6" width="941" height="1.7" fill="#111"/>
<rect x="379" y="962.6" width="941" height="1.7" fill="#111"/>
<g font-family="Liberation Sans" font-size="13.5" fill="#2a2a2a">
<text x="372.3" y="623.7" text-anchor="end" textLength="7.6" lengthAdjust="spacingAndGlyphs">0</text>
<text x="372.3" y="574.7" text-anchor="end" textLength="15.2" lengthAdjust="spacingAndGlyphs">10</text>
<text x="372.3" y="525.7" text-anchor="end" textLength="15.2" lengthAdjust="spacingAndGlyphs">20</text>
<text x="372.3" y="476.7" text-anchor="end" textLength="15.2" lengthAdjust="spacingAndGlyphs">30</text>
<text x="372.3" y="427.7" text-anchor="end" textLength="15.2" lengthAdjust="spacingAndGlyphs">40</text>
<text x="372.3" y="378.7" text-anchor="end" textLength="15.2" lengthAdjust="spacingAndGlyphs">50</text>
<text x="372.3" y="329.7" text-anchor="end" textLength="15.2" lengthAdjust="spacingAndGlyphs">60</text>
<text x="372.3" y="967.7" text-anchor="end" textLength="7.6" lengthAdjust="spacingAndGlyphs">0</text>
<text x="372.3" y="918.7" text-anchor="end" textLength="15.2" lengthAdjust="spacingAndGlyphs">10</text>
<text x="372.3" y="869.7" text-anchor="end" textLength="15.2" lengthAdjust="spacingAndGlyphs">20</text>
<text x="372.3" y="820.7" text-anchor="end" textLength="15.2" lengthAdjust="spacingAndGlyphs">30</text>
<text x="372.3" y="771.7" text-anchor="end" textLength="15.2" lengthAdjust="spacingAndGlyphs">40</text>
<text x="372.3" y="722.7" text-anchor="end" textLength="15.2" lengthAdjust="spacingAndGlyphs">50</text>
<text x="372.3" y="673.7" text-anchor="end" textLength="15.2" lengthAdjust="spacingAndGlyphs">60</text>
<text x="381.4" y="983.8" textLength="35.2" lengthAdjust="spacingAndGlyphs">00:00</text>
<text x="498.9" y="983.8" textLength="35.2" lengthAdjust="spacingAndGlyphs">03:00</text>
<text x="616.4" y="983.8" textLength="35.2" lengthAdjust="spacingAndGlyphs">06:00</text>
<text x="733.9" y="983.8" textLength="35.2" lengthAdjust="spacingAndGlyphs">09:00</text>
<text x="851.4" y="983.8" textLength="35.2" lengthAdjust="spacingAndGlyphs">12:00</text>
<text x="968.9" y="983.8" textLength="35.2" lengthAdjust="spacingAndGlyphs">15:00</text>
<text x="1086.4" y="983.8" textLength="35.2" lengthAdjust="spacingAndGlyphs">18:00</text>
<text x="1203.9" y="983.8" textLength="35.2" lengthAdjust="spacingAndGlyphs">21:00</text>
<text x="363.5" y="1000.6" textLength="71.4" lengthAdjust="spacingAndGlyphs">Apr 3, 2023</text>
<text transform="translate(341.2,464.4) rotate(-90)" text-anchor="middle" textLength="68.8" lengthAdjust="spacingAndGlyphs">Filler [min]</text>
<text transform="translate(341.2,808.9) rotate(-90)" text-anchor="middle" textLength="90" lengthAdjust="spacingAndGlyphs">Capper [min]</text>
</g>
<g font-family="Liberation Sans" font-size="13.5" fill="#222">
<rect x="1354.7" y="284.7" width="13.5" height="13.5" fill="#bdbdbd" stroke="#9a9a9a" stroke-width="1"/>
<text x="1384.2" y="297.1" textLength="60.8" lengthAdjust="spacingAndGlyphs">Unknown</text>
<rect x="1354.7" y="317.4" width="13.5" height="13.5" fill="#fee5c3" stroke="#b4a890" stroke-width="1"/>
<text x="1384.2" y="329.8" textLength="23.3" lengthAdjust="spacingAndGlyphs">Idle</text>
<rect x="1354.7" y="350.1" width="13.5" height="13.5" fill="#61e08b" stroke="#4a8a5e" stroke-width="1"/>
<text x="1384.2" y="362.5" textLength="71" lengthAdjust="spacingAndGlyphs">Productive</text>
<rect x="1354.7" y="382.8" width="13.5" height="13.5" fill="#fc6359" stroke="#9a4a44" stroke-width="1"/>
<text x="1384.2" y="395.2" textLength="67.8" lengthAdjust="spacingAndGlyphs">Downtime</text>
<rect x="1354.7" y="415.5" width="13.5" height="13.5" fill="#b9d6e1" stroke="#8a9aa0" stroke-width="1"/>
<text x="1384.2" y="427.9" textLength="38" lengthAdjust="spacingAndGlyphs">Setup</text>
</g>
<rect x="1541.5" y="340.5" width="26.4" height="248.0" fill="#fee5c3" stroke="#a59886" stroke-width="1"/>
<rect x="1567.9" y="340.5" width="218.6" height="248.0" fill="#61e08b" stroke="#3d7a50" stroke-width="1"/>
<rect x="1786.5" y="340.5" width="18.1" height="248.0" fill="#fc6359" stroke="#6e3b35" stroke-width="1"/>
<rect x="1804.6" y="340.5" width="17.7" height="248.0" fill="#b9d6e1" stroke="#82929a" stroke-width="1"/>
<rect x="1541.5" y="684.5" width="26.4" height="248.0" fill="#fee5c3" stroke="#a59886" stroke-width="1"/>
<rect x="1567.9" y="684.5" width="218.6" height="248.0" fill="#61e08b" stroke="#3d7a50" stroke-width="1"/>
<rect x="1786.5" y="684.5" width="18.1" height="248.0" fill="#fc6359" stroke="#6e3b35" stroke-width="1"/>
<rect x="1804.6" y="684.5" width="17.7" height="248.0" fill="#b9d6e1" stroke="#82929a" stroke-width="1"/>
<g font-family="Liberation Sans" font-size="13" fill="#2a2a2a" text-anchor="middle"><text x="1541.4" y="983.6">0</text><text x="1638.7" y="983.6" textLength="22.5" lengthAdjust="spacingAndGlyphs">500</text><text x="1736" y="983.6" textLength="29" lengthAdjust="spacingAndGlyphs">1000</text><text x="1833" y="983.6" textLength="29" lengthAdjust="spacingAndGlyphs">1500</text><text x="1689" y="1021.5" font-size="16" textLength="29" lengthAdjust="spacingAndGlyphs">min</text></g>
</svg>
</body></html>
